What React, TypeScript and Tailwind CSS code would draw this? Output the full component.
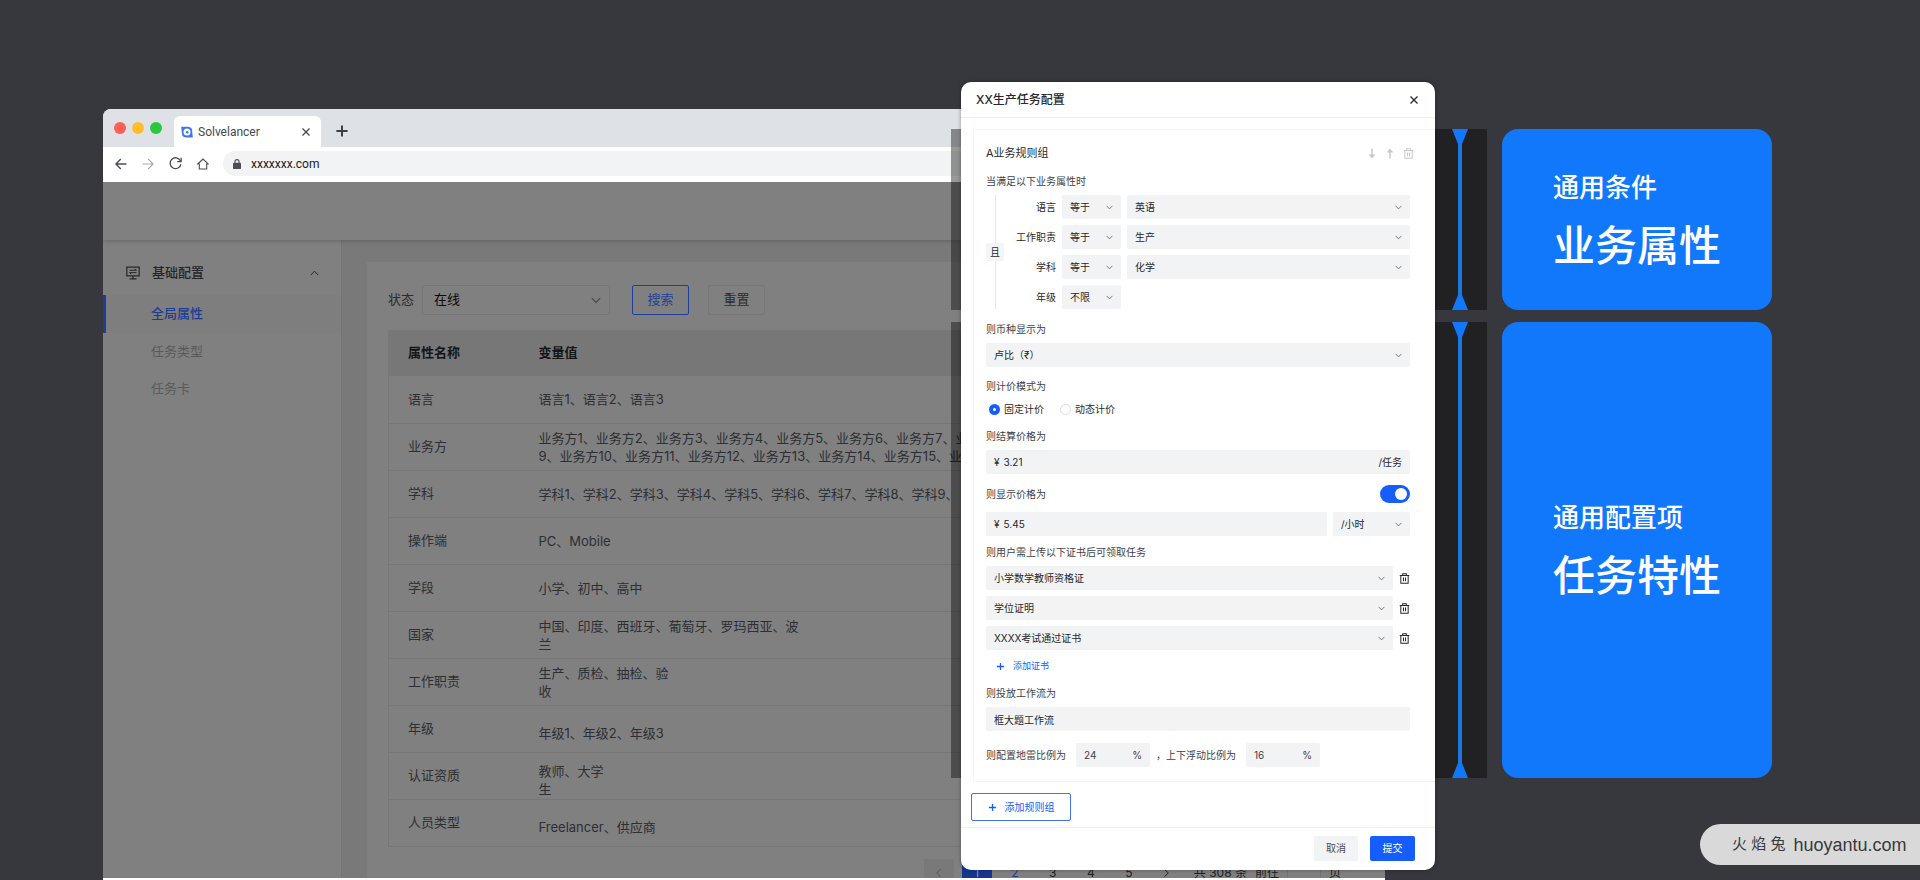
import { useState } from "react";
import type { ReactNode } from "react";

type Row = {
  name: string;
  lines: string[];
  low?: boolean;
};

const rows: Row[] = [
  { name: "语言", lines: ["语言1、语言2、语言3"] },
  {
    name: "业务方",
    lines: [
      "业务方1、业务方2、业务方3、业务方4、业务方5、业务方6、业务方7、业务方",
      "9、业务方10、业务方11、业务方12、业务方13、业务方14、业务方15、业务",
    ],
  },
  {
    name: "学科",
    lines: ["学科1、学科2、学科3、学科4、学科5、学科6、学科7、学科8、学科9、"],
  },
  { name: "操作端", lines: ["PC、Mobile"] },
  { name: "学段", lines: ["小学、初中、高中"] },
  { name: "国家", lines: ["中国、印度、西班牙、葡萄牙、罗玛西亚、波", "兰"] },
  { name: "工作职责", lines: ["生产、质检、抽检、验", "收"] },
  { name: "年级", lines: ["年级1、年级2、年级3"], low: true },
  { name: "认证资质", lines: ["教师、大学", "生"], low: true },
  { name: "人员类型", lines: ["Freelancer、供应商"], low: true },
];

const conditions = [
  { label: "语言", op: "等于", value: "英语" },
  { label: "工作职责", op: "等于", value: "生产" },
  { label: "学科", op: "等于", value: "化学" },
  { label: "年级", op: "不限", value: "" },
];

const certificates = ["小学数学教师资格证", "学位证明", "XXXX考试通过证书"];

function Chevron({ className = "" }: { className?: string }) {
  return (
    <svg viewBox="0 0 12 8" fill="none" stroke="currentColor" className={className}>
      <path d="M1 1.2 6 6.4l5-5.2" strokeWidth="1.3" />
    </svg>
  );
}

function Trash() {
  return (
    <svg viewBox="0 0 12 12" fill="none" stroke="currentColor" className="size-[11px]">
      <path d="M.8 2.600h10.400M4 2.400V.9h4v1.500M2 2.600v8.600h8V2.600M4.900 4.800v4.200M7.100 4.800v4.200" strokeWidth="1.1" />
    </svg>
  );
}

function Plus({ className = "" }: { className?: string }) {
  return (
    <svg viewBox="0 0 10 10" stroke="currentColor" className={className}>
      <path d="M5 1v8M1 5h8" strokeWidth="1.4" />
    </svg>
  );
}

function Arrow({ className = "" }: { className?: string }) {
  return (
    <svg viewBox="0 0 8 12" fill="none" stroke="currentColor" className={className}>
      <path d="M4 2v9.500" strokeWidth="1.6" />
      <path d="M1 4.600 4 1l3 3.600z" fill="currentColor" strokeWidth="0.6" />
    </svg>
  );
}

function Close({ className = "" }: { className?: string }) {
  return (
    <svg viewBox="0 0 10 10" stroke="currentColor" className={className}>
      <path d="m1.500 1.500 7 7m0-7-7 7" strokeWidth="1.3" />
    </svg>
  );
}

function Select({
  label,
  value,
  className = "",
}: {
  label: string;
  value: string;
  className?: string;
}) {
  return (
    <div className={`relative ${className}`}>
      <select
        aria-label={label}
        className="h-6 w-full appearance-none rounded-xs bg-[#f2f3f5] pr-6 pl-2 text-[10px] text-[#26282c] outline-none"
      >
        <option>{value}</option>
      </select>
      <Chevron className="pointer-events-none absolute top-[10px] right-2 h-[5px] w-[7px] text-[#55585e]" />
    </div>
  );
}

function FieldLabel({ children, id }: { children: ReactNode; id?: string }) {
  return (
    <label htmlFor={id} className="mb-1 block h-5 leading-5 text-[#3f4248]">
      {children}
    </label>
  );
}

function TabBar() {
  return (
    <div className="flex h-[38px] shrink-0 items-end bg-[#dee1e6] pl-[11px]">
      <div className="flex h-full items-center gap-[6px]">
        <span className="size-3 rounded-full bg-[#ff5f57]" />
        <span className="size-3 rounded-full bg-[#febc2e]" />
        <span className="size-3 rounded-full bg-[#28c840]" />
      </div>
      <div className="ml-3 flex h-[31px] w-[147px] items-center rounded-t-md bg-white px-[7px] text-[#45494d]">
        <svg viewBox="0 0 12 12" className="size-3">
          <path
            d="M.2.8h7A4.400 4.400 0 0 1 11.200 5.200l.6 6.200H4.900A4.200 4.200 0 0 1 .9 7.200z"
            fill="#3f76ee"
          />
          <circle cx="6" cy="6" r="3.500" fill="#fff" />
          <circle cx="6.200" cy="6.200" r="1.300" fill="#3f76ee" />
        </svg>
        <span className="ml-[5px] flex-1 font-[Roboto] text-xs">Solvelancer</span>
        <button aria-label="关闭标签页" className="mr-[3px]">
          <Close className="size-[10px]" />
        </button>
      </div>
      <button aria-label="新建标签页" className="mb-[9px] ml-[14px] text-[#3c4043]">
        <Plus className="size-[14px]" />
      </button>
    </div>
  );
}

function AddressBar() {
  return (
    <div className="flex h-[35px] shrink-0 items-center bg-white pb-[2px] pl-3 text-[#4a4d52]">
      <div className="flex items-center gap-[15px]">
        <button aria-label="后退">
          <svg viewBox="0 0 12 12" fill="none" stroke="currentColor" className="size-3">
            <path d="M11.500 6H1M5.800 1 .9 6l4.900 5" strokeWidth="1.3" />
          </svg>
        </button>
        <button aria-label="前进" className="text-[#a9abae]">
          <svg viewBox="0 0 12 12" fill="none" stroke="currentColor" className="size-3">
            <path d="M.5 6H11M6.200 1l4.900 5-4.900 5" strokeWidth="1.1" />
          </svg>
        </button>
        <button aria-label="刷新">
          <svg viewBox="0 0 12 12" fill="none" stroke="currentColor" className="size-[13px]">
            <path d="M10.600 3.600A5 5 0 1 0 11 6.500" strokeWidth="1.2" />
            <path d="M11.200.8v3.500H7.600" strokeWidth="1.2" />
          </svg>
        </button>
        <button aria-label="主页">
          <svg viewBox="0 0 12 12" fill="none" stroke="currentColor" className="size-3">
            <path d="M.7 6 6 1l5.300 5H9.700v5H2.300V6z" strokeWidth="1.1" />
          </svg>
        </button>
      </div>
      <div className="ml-[14px] flex h-[25px] flex-1 items-center rounded-l-full bg-[#f1f3f4] pl-[10px]">
        <svg viewBox="0 0 8 10" className="h-[10px] w-2" fill="none">
          <rect y="3.800" width="8" height="6.200" rx=".8" fill="#4a4d52" />
          <path d="M2 4V2.600a2 2 0 0 1 4 0V4" stroke="#4a4d52" strokeWidth="1.1" />
        </svg>
        <input
          aria-label="地址"
          defaultValue="xxxxxxx.com"
          className="ml-[10px] flex-1 bg-transparent font-[Roboto] text-xs text-[#202124] outline-none"
        />
      </div>
    </div>
  );
}

function Sidebar() {
  return (
    <nav className="w-[239px] shrink-0 border-r border-[#747474] pt-[11px] text-[13px]">
      <button className="flex h-[44px] w-full items-center pr-[22px] pl-[23px] font-medium text-[#26272b]">
        <svg viewBox="0 0 14 14" fill="none" stroke="currentColor" className="size-[14px]">
          <path d="M.8 1.200h12.400v8.600H.8zM7 9.800V12.700M3.500 12.900h7" strokeWidth="1.2" />
          <path d="M3.500 4.300h7L8.800 2.900M10.500 6.600h-7l1.700 1.400" />
        </svg>
        <span className="ml-3 flex-1 text-left">基础配置</span>
        <Chevron className="h-[6px] w-[9px] rotate-180" />
      </button>
      <a
        href="#attributes"
        className="flex h-[38px] items-center border-l-3 border-[#1c3c98] bg-[#7e7e7e] pl-[45px] font-medium text-[#1d3d94]"
      >
        全局属性
      </a>
      <a href="#types" className="flex h-[37px] items-center pl-12 text-[#5a5a5c]">
        任务类型
      </a>
      <a href="#cards" className="flex h-[37px] items-center pl-12 text-[#5a5a5c]">
        任务卡
      </a>
    </nav>
  );
}

function Pagination() {
  return (
    <div className="mt-3 flex h-7 shrink-0 items-center justify-end text-xs leading-7 whitespace-nowrap text-[#202124]">
      <button aria-label="上一页" className="flex h-7 w-[30px] justify-center bg-[#797979]">
        <Chevron className="mt-[11px] h-[6px] w-[9px] rotate-90 text-[#55565a]" />
      </button>
      <button className="ml-2 h-7 w-[30px] bg-[#16358f] text-[#8791b0]">1</button>
      <button className="ml-2 h-7 w-[30px] text-[#1d3d94]">2</button>
      <button className="ml-2 h-7 w-[30px]">3</button>
      <button className="ml-2 h-7 w-[30px]">4</button>
      <button className="ml-2 h-7 w-[30px]">5</button>
      <button aria-label="下一页" className="ml-2 flex h-7 w-[30px] justify-center">
        <Chevron className="mt-[11px] h-[6px] w-[9px] -rotate-90" />
      </button>
      <span className="ml-3">共 308 条</span>
      <label htmlFor="jump" className="ml-2">
        前往
      </label>
      <input id="jump" className="ml-2 h-7 w-[34px] border-x border-[#757575]" />
      <span className="mr-[23px] ml-2">页</span>
    </div>
  );
}

function Content() {
  return (
    <section className="flex min-w-0 flex-1 flex-col bg-[#808080] px-[21px] pt-[23px] text-[13px]">
      <div className="mb-[15px] flex h-[30px] shrink-0 items-center">
        <label htmlFor="status" className="text-[#2b2c30]">
          状态
        </label>
        <div className="relative ml-2 w-[188px]">
          <select
            id="status"
            className="h-[30px] w-full appearance-none rounded-xs border border-[#757575] pl-[11px] text-[#0a0a0a] outline-none"
          >
            <option>在线</option>
          </select>
          <Chevron className="pointer-events-none absolute top-[12px] right-[9px] h-[7px] w-[10px] text-[#45464a]" />
        </div>
        <button className="ml-[22px] h-[30px] w-[57px] rounded-xs border border-[#1f3f9b] text-[#24409a]">
          搜索
        </button>
        <button className="ml-[19px] h-[30px] w-[57px] rounded-xs border border-[#787878] text-[#2b2c30]">
          重置
        </button>
      </div>

      <table className="w-full table-fixed border-l border-[#777777] text-left whitespace-nowrap text-[#2c2f33]">
        <thead>
          <tr className="h-[46px] bg-[#777777] text-[#141518]">
            <th className="w-[131px] py-0 pl-[19px] font-bold">属性名称</th>
            <th className="py-0 pl-[19px] font-bold">变量值</th>
          </tr>
        </thead>
        <tbody>
          {rows.map((row) => (
            <tr key={row.name} className="h-[47px] border-b border-[#777777]">
              <td className="py-0 pl-[19px]">{row.name}</td>
              <td
                className={
                  row.low
                    ? "overflow-hidden pt-2 pl-[19px] leading-[18px]"
                    : "overflow-hidden py-0 pl-[19px] leading-[18px]"
                }
              >
                {row.lines.map((line) => (
                  <div key={line}>{line}</div>
                ))}
              </td>
            </tr>
          ))}
        </tbody>
      </table>
      <Pagination />
    </section>
  );
}

function Connector() {
  return (
    <div className="flex w-4 flex-col items-center text-[#1178fc]">
      <svg viewBox="0 0 16 15" fill="currentColor" className="h-[15px] w-4 shrink-0">
        <path d="M0 0h16L10 15H6z" />
      </svg>
      <span className="w-1 flex-1 bg-[#1a78e0]" />
      <svg viewBox="0 0 16 15" fill="currentColor" className="h-[15px] w-4 shrink-0">
        <path d="M0 15h16L10 0H6z" />
      </svg>
    </div>
  );
}

function Callout({
  small,
  big,
  className,
}: {
  small: string;
  big: string;
  className: string;
}) {
  return (
    <div className={`flex gap-[15px] ${className}`}>
      <div className="flex w-[536px] justify-end bg-black/40 pr-[19px]">
        <Connector />
      </div>
      <div className="flex w-[270px] flex-col justify-center rounded-2xl bg-[#1178fc] pt-1 pl-[51px] font-medium text-white">
        <p className="text-[26px] leading-10">{small}</p>
        <p className="mt-2 text-[42px] leading-[60px]">{big}</p>
      </div>
    </div>
  );
}

function RuleDialog() {
  const [mode, setMode] = useState("fixed");
  const [showPrice, setShowPrice] = useState(true);

  return (
    <div
      role="dialog"
      aria-label="XX生产任务配置"
      className="absolute top-[82px] left-[961px] w-[474px] rounded-[10px] bg-white text-[10px] text-[#26282c] shadow-[0_0_4px_rgba(0,0,0,0.35)]"
    >
      <header className="flex h-9 items-center justify-between border-b border-[#f0f0f2] pr-4 pl-[15px]">
        <h2 className="text-xs font-medium">XX生产任务配置</h2>
        <button aria-label="关闭">
          <Close className="size-[10px]" />
        </button>
      </header>

      <div className="mt-[11px] ml-3 rounded-l-xs border-y border-l border-[#f3f3f5] pt-[13px] pr-[25px] pb-[14px] pl-3">
        <div className="-mr-1 mb-2 flex h-5 items-center text-[#c6c8cc]">
          <h3 className="flex-1 text-[11px] text-[#26282c]">A业务规则组</h3>
          <button aria-label="下移" className="mr-[10px]">
            <Arrow className="h-[11px] w-2 rotate-180" />
          </button>
          <button aria-label="上移" className="mr-[9px]">
            <Arrow className="h-[11px] w-2" />
          </button>
          <button aria-label="删除规则组">
            <Trash />
          </button>
        </div>

        <FieldLabel>当满足以下业务属性时</FieldLabel>
        <div className="flex">
          <div className="flex w-[18px] flex-col items-center">
            <span className="w-px flex-1 bg-[#e8e9eb]" />
            <span className="rounded-xs bg-[#f4f5f6] px-1 leading-[18px]">且</span>
            <span className="w-px flex-1 bg-[#e8e9eb]" />
          </div>
          <div className="flex flex-1 flex-col gap-[6px]">
            {conditions.map((c) => (
              <div key={c.label} className="flex items-center gap-[6px]">
                <span className="w-[52px] text-right">{c.label}</span>
                <Select label={`${c.label}条件`} value={c.op} className="w-[59px]" />
                {c.value && (
                  <Select label={c.label} value={c.value} className="flex-1" />
                )}
              </div>
            ))}
          </div>
        </div>

        <div className="mt-[10px]">
          <FieldLabel>则币种显示为</FieldLabel>
          <Select label="则币种显示为" value="卢比（₹）" />
        </div>

        <div className="mt-[9px]">
          <FieldLabel>则计价模式为</FieldLabel>
          <div className="flex h-[18px] items-center gap-4 pl-[3px]">
            <label className="flex items-center gap-1">
              <input
                type="radio"
                name="mode"
                checked={mode === "fixed"}
                onChange={() => setMode("fixed")}
                className="size-[11px] appearance-none rounded-full border border-[#d9dbdf] checked:border-4 checked:border-[#155dfc]"
              />
              固定计价
            </label>
            <label className="flex items-center gap-1">
              <input
                type="radio"
                name="mode"
                checked={mode === "dynamic"}
                onChange={() => setMode("dynamic")}
                className="size-[11px] appearance-none rounded-full border border-[#d9dbdf] checked:border-4 checked:border-[#155dfc]"
              />
              动态计价
            </label>
          </div>
        </div>

        <div className="mt-2">
          <FieldLabel id="settle">则结算价格为</FieldLabel>
          <div className="flex h-6 items-center rounded-xs bg-[#f2f3f5] px-2">
            <span>¥</span>
            <input
              id="settle"
              defaultValue="3.21"
              className="ml-1 min-w-0 flex-1 bg-transparent outline-none"
            />
            <span>/任务</span>
          </div>
        </div>

        <div className="mt-[10px]">
          <div className="mb-2 flex h-5 items-center justify-between">
            <label htmlFor="display" className="text-[#3f4248]">
              则显示价格为
            </label>
            <input
              type="checkbox"
              aria-label="显示价格"
              checked={showPrice}
              onChange={() => setShowPrice(!showPrice)}
              className="relative h-[18px] w-[30px] appearance-none rounded-full bg-[#c9cbd0] before:absolute before:top-[3px] before:left-[3px] before:size-3 before:rounded-full before:bg-white checked:bg-[#155dfc] checked:before:left-[15px]"
            />
          </div>
          <div className="flex gap-[6px]">
            <div className="flex h-6 flex-1 items-center rounded-xs bg-[#f2f3f5] px-2">
              <span>¥</span>
              <input
                id="display"
                defaultValue="5.45"
                className="ml-1 min-w-0 flex-1 bg-transparent outline-none"
              />
            </div>
            <Select label="价格单位" value="/小时" className="w-[77px]" />
          </div>
        </div>

        <div className="mt-[6px]">
          <FieldLabel>则用户需上传以下证书后可领取任务</FieldLabel>
          <div className="flex flex-col gap-[6px]">
            {certificates.map((name) => (
              <div key={name} className="flex items-center gap-[6px]">
                <Select label={name} value={name} className="flex-1" />
                <button aria-label={`删除${name}`}>
                  <Trash />
                </button>
              </div>
            ))}
          </div>
          <button className="mt-[7px] flex h-[18px] items-center gap-2 pl-[10px] text-[9px] text-[#155dfc]">
            <Plus className="size-[9px]" />
            添加证书
          </button>
        </div>

        <div className="mt-2">
          <FieldLabel id="flow">则投放工作流为</FieldLabel>
          <input
            id="flow"
            defaultValue="框大题工作流"
            className="block h-6 w-full rounded-xs bg-[#f2f3f5] px-2 outline-none"
          />
        </div>

        <div className="mt-3 flex items-center text-[#3f4248]">
          <label htmlFor="mine">则配置地雷比例为</label>
          <div className="ml-[10px] flex h-6 w-[74px] items-center rounded-xs bg-[#f2f3f5] px-2">
            <input id="mine" defaultValue="24" className="min-w-0 flex-1 outline-none" />
            <span>%</span>
          </div>
          <label htmlFor="float" className="ml-[6px]">
            ，上下浮动比例为
          </label>
          <div className="ml-[10px] flex h-6 w-[74px] items-center rounded-xs bg-[#f2f3f5] px-2">
            <input id="float" defaultValue="16" className="min-w-0 flex-1 outline-none" />
            <span>%</span>
          </div>
        </div>
      </div>

      <button className="mt-[11px] mb-[6px] ml-[10px] flex h-7 w-[100px] items-center justify-center gap-2 rounded-xs border border-[#3f73ee] text-[#155dfc]">
        <Plus className="size-[9px]" />
        添加规则组
      </button>

      <footer className="flex justify-end gap-3 border-t border-[#f0f0f2] pt-2 pr-5 pb-[9px]">
        <button className="h-[25px] w-11 rounded-xs bg-[#f2f3f5] text-[#4a4d52]">取消</button>
        <button className="h-[25px] w-[45px] rounded-xs bg-[#155dfc] text-white">提交</button>
      </footer>
    </div>
  );
}

export default function App() {
  return (
    <main className="relative flex h-screen overflow-hidden bg-[#37383d] pt-[109px] pr-[535px] pl-[103px] font-[Inter,'Noto_Sans_CJK_SC',sans-serif]">
      {/* Browser window */}
      <div className="flex min-w-0 flex-1 flex-col overflow-hidden rounded-t-lg bg-white pb-[2px]">
        <TabBar />
        <AddressBar />
        <div className="flex min-h-0 flex-1 flex-col overflow-hidden bg-[#808080]">
          <div className="relative h-[58px] shrink-0 bg-[#808080] shadow-[0_1px_5px_rgba(0,0,0,0.2)]" />
          <div className="flex min-h-0 flex-1">
            <Sidebar />
            <div className="flex min-w-0 flex-1 bg-[#797979] pt-[22px] pl-[25px]">
              <Content />
            </div>
          </div>
        </div>
      </div>

      {/* Callouts */}
      <div className="absolute top-[129px] left-[951px] flex flex-col gap-3">
        <Callout small="通用条件" big="业务属性" className="h-[181px]" />
        <Callout small="通用配置项" big="任务特性" className="h-[456px]" />
      </div>

      <RuleDialog />

      {/* Site mark */}
      <div className="absolute right-0 bottom-[15px] flex h-[41px] w-[220px] items-center gap-2 rounded-l-full bg-[#d9d9d9] pl-8 whitespace-nowrap text-[#38393d]">
        <span className="text-[15px]">火 焰 兔</span>
        <span className="font-['Liberation_Sans',sans-serif] text-lg">huoyantu.com</span>
      </div>
    </main>
  );
}
